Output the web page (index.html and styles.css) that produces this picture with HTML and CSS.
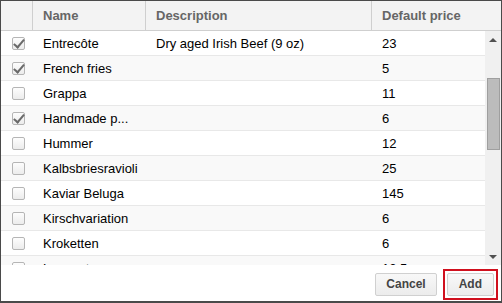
FILE: index.html
```html
<!DOCTYPE html>
<html lang="en">
<head>
    <meta charset="UTF-8">
    <title>Add items</title>
    <link rel="stylesheet" href="styles.css">
</head>
<body>
    <div class="dialog">
        <div class="grid-head">
            <div class="cell col-check"></div>
            <div class="cell col-name">Name</div>
            <div class="cell col-desc">Description</div>
            <div class="cell col-price">Default price</div>
        </div>
        <div class="grid-body">
            <div class="rows">
                <div class="row"><div class="cell col-check"><span class="box checked"></span></div><div class="cell col-name">Entrecôte</div><div class="cell col-desc">Dry aged Irish Beef (9 oz)</div><div class="cell col-price">23</div></div>
                <div class="row"><div class="cell col-check"><span class="box checked"></span></div><div class="cell col-name">French fries</div><div class="cell col-desc"></div><div class="cell col-price">5</div></div>
                <div class="row"><div class="cell col-check"><span class="box"></span></div><div class="cell col-name">Grappa</div><div class="cell col-desc"></div><div class="cell col-price">11</div></div>
                <div class="row"><div class="cell col-check"><span class="box checked"></span></div><div class="cell col-name">Handmade p...</div><div class="cell col-desc"></div><div class="cell col-price">6</div></div>
                <div class="row"><div class="cell col-check"><span class="box"></span></div><div class="cell col-name">Hummer</div><div class="cell col-desc"></div><div class="cell col-price">12</div></div>
                <div class="row"><div class="cell col-check"><span class="box"></span></div><div class="cell col-name">Kalbsbriesravioli</div><div class="cell col-desc"></div><div class="cell col-price">25</div></div>
                <div class="row"><div class="cell col-check"><span class="box"></span></div><div class="cell col-name">Kaviar Beluga</div><div class="cell col-desc"></div><div class="cell col-price">145</div></div>
                <div class="row"><div class="cell col-check"><span class="box"></span></div><div class="cell col-name">Kirschvariation</div><div class="cell col-desc"></div><div class="cell col-price">6</div></div>
                <div class="row"><div class="cell col-check"><span class="box"></span></div><div class="cell col-name">Kroketten</div><div class="cell col-desc"></div><div class="cell col-price">6</div></div>
                <div class="row"><div class="cell col-check"><span class="box"></span></div><div class="cell col-name">Languste</div><div class="cell col-desc"></div><div class="cell col-price">12.5</div></div>
            </div>
            <div class="scrollbar">
                <div class="arrow up"></div>
                <div class="track"><div class="thumb"></div></div>
                <div class="arrow down"></div>
            </div>
        </div>
        <div class="footer">
            <button class="btn">Cancel</button>
            <span class="focus-ring"><button class="btn">Add</button></span>
        </div>
    </div>
</body>
</html>
```

FILE: styles.css
```css
html, body {
    margin: 0;
    padding: 0;
    background-color: #4a4a4a;
}
body {
    font-family: "Liberation Sans", Arial, sans-serif;
    font-size: 13px;
    color: #000;
}
.dialog {
    width: 500px;
    height: 300px;
    margin: 1px 1px 2px 1px;
    background-color: #fff;
    display: flex;
    flex-direction: column;
    overflow: hidden;
}
.grid-head {
    display: flex;
    height: 29px;
    background-color: #f3f3f3;
    border-bottom: 1px solid #cfcfcf;
    color: #666;
    font-weight: bold;
}
.grid-head .cell {
    border-right: 1px solid #cfcfcf;
    line-height: 29px;
}
.grid-head .col-price {
    border-right: none;
    flex: 1;
}
.cell {
    box-sizing: border-box;
    padding-left: 10px;
    white-space: nowrap;
    overflow: hidden;
    text-overflow: ellipsis;
}
.col-check {
    width: 32px;
    padding-left: 11px;
}
.col-name {
    width: 113px;
    padding-right: 4px;
}
.col-desc {
    width: 226px;
}
.col-price {
    width: 113px;
}
.grid-body {
    display: flex;
    height: 234px;
    overflow: hidden;
}
.rows {
    flex: 1;
    overflow: hidden;
}
.row {
    display: flex;
    height: 24px;
    line-height: 24px;
    border-bottom: 1px solid #e8e8e8;
}
.row:nth-child(even) {
    background-color: #f9f9f9;
}
.row .cell {
    padding-top: 1px;
    line-height: 24px;
}
.box {
    display: inline-block;
    box-sizing: border-box;
    width: 13px;
    height: 13px;
    margin-top: 5px;
    vertical-align: top;
    border: 1px solid #b5b5b5;
    border-radius: 2px;
    background: linear-gradient(#fdfdfd, #ececec);
    position: relative;
}
.box.checked::after {
    content: "";
    position: absolute;
    left: 3px;
    top: -1px;
    width: 4px;
    height: 9px;
    border-right: 2px solid #6a6a6a;
    border-bottom: 2px solid #6a6a6a;
    transform: rotate(40deg);
}
.scrollbar {
    width: 16px;
    background-color: #f0f0f0;
    display: flex;
    flex-direction: column;
}
.arrow {
    height: 17px;
    position: relative;
}
.arrow::after {
    content: "";
    position: absolute;
    left: 4px;
    width: 0;
    height: 0;
    border-left: 4px solid transparent;
    border-right: 4px solid transparent;
}
.arrow.up::after {
    top: 7px;
    border-bottom: 4px solid #505050;
}
.arrow.down::after {
    top: 7px;
    border-top: 4px solid #505050;
}
.track {
    flex: 1;
    padding: 30px 1px 0 2px;
}
.thumb {
    height: 70px;
    background-color: #bcbcbc;
    border: 1px solid #9f9f9f;
}
.footer {
    flex: 1;
    display: flex;
    justify-content: flex-end;
    align-items: center;
    gap: 6px;
    padding-right: 3px;
    padding-top: 2px;
}
.btn {
    font-family: "Liberation Sans", Arial, sans-serif;
    font-size: 12px;
    font-weight: bold;
    color: #444;
    height: 23px;
    padding: 0 10px;
    border: 1px solid #d0d0d0;
    border-radius: 2px;
    background: linear-gradient(#f8f8f8, #ececec);
}
.focus-ring {
    display: flex;
    padding: 2px;
    border: 2px solid #d0101e;
}
.focus-ring .btn {
    padding: 0 11px;
}
```
